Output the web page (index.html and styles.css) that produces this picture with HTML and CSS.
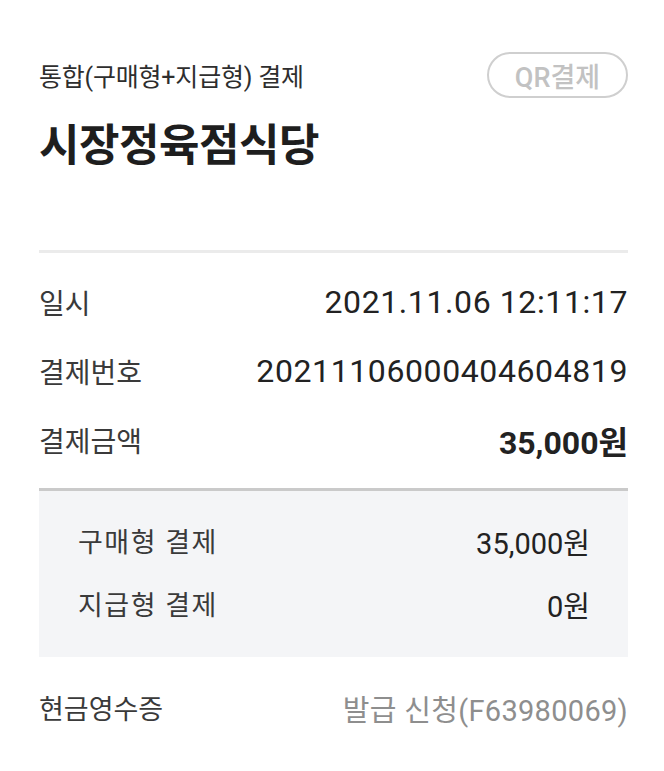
FILE: index.html
```html
<!DOCTYPE html>
<html lang="ko">
<head>
  <meta charset="UTF-8" />
  <meta name="viewport" content="width=device-width, initial-scale=1.0"/>
  <title>결제 상세</title>
  <link rel="stylesheet" href="styles.css">
</head>
<body>
  <div class="receipt">
    <div class="head">
      <div class="pay-type">통합(구매형+지급형) 결제</div>
      <div class="qr-badge">QR결제</div>
    </div>
    <h1 class="store">시장정육점식당</h1>

    <div class="details">
      <div class="row">
        <span class="label">일시</span>
        <span class="value">2021.11.06 12:11:17</span>
      </div>
      <div class="row">
        <span class="label">결제번호</span>
        <span class="value">20211106000404604819</span>
      </div>
      <div class="row">
        <span class="label">결제금액</span>
        <span class="value total">35,000원</span>
      </div>
    </div>

    <div class="breakdown">
      <div class="row sub">
        <span class="label">구매형 결제</span>
        <span class="value">35,000원</span>
      </div>
      <div class="row sub">
        <span class="label">지급형 결제</span>
        <span class="value">0원</span>
      </div>
    </div>

    <div class="row cash">
      <span class="label">현금영수증</span>
      <span class="value muted">발급 신청(F63980069)</span>
    </div>
  </div>
</body>
</html>
```

FILE: styles.css
```css
body {
  margin: 0;
  background: #ffffff;
  font-family: Roboto, "Noto Sans CJK KR", sans-serif;
  color: #222;
}
.receipt {
  padding: 52px 36px 0 39px;
}
.head {
  display: flex;
  justify-content: space-between;
  align-items: center;
}
.pay-type {
  font-size: 25px;
  color: #2e2e2e;
  letter-spacing: -0.2px;
}
.qr-badge {
  width: 137px;
  height: 42px;
  border: 2px solid #cfcfcf;
  border-radius: 23px;
  display: flex;
  align-items: center;
  justify-content: center;
  font-size: 27px;
  font-weight: 500;
  color: #c2c2c2;
}
.store {
  margin: 20px 0 0;
  font-size: 44px;
  font-weight: bold;
  color: #1e1e1e;
  line-height: 56px;
  letter-spacing: -0.5px;
}
.details {
  margin-top: 76px;
  border-top: 3px solid #ebebeb;
  padding: 14px 0;
}
.row {
  display: flex;
  justify-content: space-between;
  align-items: center;
  height: 69px;
}
.label {
  font-size: 28px;
  color: #3a3a3a;
}
.value {
  font-size: 32px;
  letter-spacing: 0.6px;
  color: #222;
}
.value.total {
  font-weight: bold;
  letter-spacing: 0;
}
.breakdown {
  background: #f4f5f7;
  border-top: 3px solid #cacaca;
  padding: 18px 38px 22px 39px;
}
.row.sub {
  height: 63px;
}
.row.sub .label {
  font-size: 27px;
  letter-spacing: 1.5px;
}
.row.sub .value {
  font-size: 29px;
  letter-spacing: 0;
}
.row.cash {
  margin-top: 16px;
}
.row.cash .label {
  font-size: 27px;
}
.value.muted {
  font-size: 29px;
  color: #8e8e8e;
  letter-spacing: 0.3px;
}
```
